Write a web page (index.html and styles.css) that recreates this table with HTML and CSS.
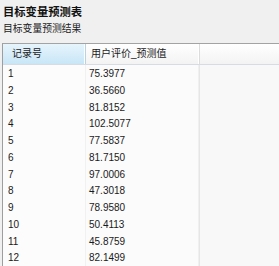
FILE: index.html
```html
<!DOCTYPE html>
<html lang="zh">
<head>
<meta charset="utf-8">
<title>目标变量预测表</title>
<link rel="stylesheet" href="styles.css">
</head>
<body>
<div class="page">
  <div class="title">目标变量预测表</div>
  <div class="subtitle">目标变量预测结果</div>
  <div class="grid">
    <div class="head">
      <div class="hc hc-sel">记录号</div>
      <div class="hc">用户评价_预测值</div>
      <div class="hc hc-fill"></div>
    </div>
    <div class="row"><div class="c c1">1</div><div class="c c2">75.3977</div><div class="c c3"></div></div>
    <div class="row"><div class="c c1">2</div><div class="c c2">36.5660</div><div class="c c3"></div></div>
    <div class="row"><div class="c c1">3</div><div class="c c2">81.8152</div><div class="c c3"></div></div>
    <div class="row"><div class="c c1">4</div><div class="c c2">102.5077</div><div class="c c3"></div></div>
    <div class="row"><div class="c c1">5</div><div class="c c2">77.5837</div><div class="c c3"></div></div>
    <div class="row"><div class="c c1">6</div><div class="c c2">81.7150</div><div class="c c3"></div></div>
    <div class="row"><div class="c c1">7</div><div class="c c2">97.0006</div><div class="c c3"></div></div>
    <div class="row"><div class="c c1">8</div><div class="c c2">47.3018</div><div class="c c3"></div></div>
    <div class="row"><div class="c c1">9</div><div class="c c2">78.9580</div><div class="c c3"></div></div>
    <div class="row"><div class="c c1">10</div><div class="c c2">50.4113</div><div class="c c3"></div></div>
    <div class="row"><div class="c c1">11</div><div class="c c2">45.8759</div><div class="c c3"></div></div>
    <div class="row"><div class="c c1">12</div><div class="c c2">82.1499</div><div class="c c3"></div></div>
  </div>
</div>
</body>
</html>
```

FILE: styles.css
```css
html, body {
  margin: 0;
  padding: 0;
  background: #f0f0f0;
}
body {
  font-family: "Liberation Sans", "Noto Sans CJK SC", sans-serif;
  color: #1a1a1a;
  width: 279px;
  height: 266px;
  overflow: hidden;
}
.page {
  display: flex;
  flex-direction: column;
  height: 266px;
  overflow: hidden;
}
.title {
  margin: 4px 0 0 3px;
  height: 16px;
  line-height: 16px;
  font-size: 11.3px;
  font-weight: bold;
  color: #111;
}
.subtitle {
  margin: 1px 0 0 3px;
  height: 16px;
  line-height: 16px;
  font-size: 9.8px;
  color: #222;
}
.grid {
  margin: 6px 0 0 2px;
  border-top: 1px solid #a3a3a3;
  border-left: 1px solid #9e9e9e;
  box-shadow: inset 1px 0 #ffffff, inset 2px 0 #d8d8d8;
  background: #f9f9f9;
  display: flex;
  flex-direction: column;
  flex: 1;
  min-height: 0;
  overflow: hidden;
}
.head {
  display: grid;
  grid-template-columns: 83px 114px 1fr;
  height: 20px;
  flex: none;
  border-bottom: 1px solid #d6dde2;
  background: linear-gradient(#ffffff, #f3f3f3);
}
.hc {
  font-size: 10px;
  line-height: 20px;
  padding-left: 5px;
  border-right: 1px solid #dcdcdc;
  box-shadow: inset -1px 0 #ffffff;
  white-space: nowrap;
  overflow: hidden;
}
.hc-sel {
  padding-left: 9px;
  background: linear-gradient(#e6f4fc, #c8e6f7);
  border-right: 1px solid #b7d3e3;
}
.hc-fill {
  border-right: none;
  box-shadow: none;
}
.row {
  display: grid;
  grid-template-columns: 83px 114px 1fr;
  height: 16.75px;
  flex: none;
  box-sizing: border-box;
  border-bottom: 1px solid #ececec;
}
.c {
  font-size: 10px;
  line-height: 16px;
  padding-top: 1px;
  white-space: nowrap;
}
.c1 {
  padding-left: 5px;
  background: #fcfcfc;
  border-right: 1px solid #f1f1f1;
}
.c2 {
  padding-left: 3px;
  background: #fbfbfb;
  border-right: 1px solid #e6e6e6;
  box-shadow: inset -1px 0 #f0f0f0;
}
.c3 {
  background: #f8f8f8;
}
```
